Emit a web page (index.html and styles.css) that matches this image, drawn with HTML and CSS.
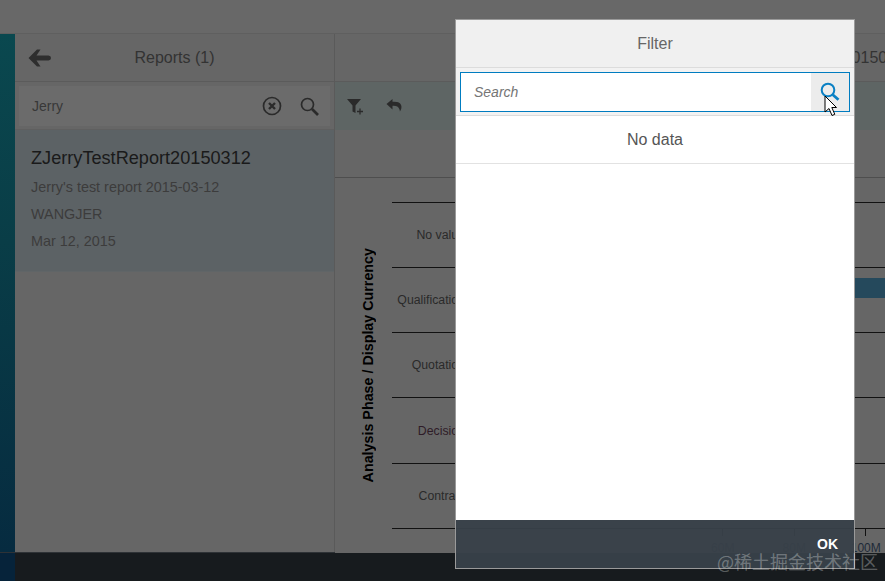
FILE: index.html
```html
<!DOCTYPE html>
<html lang="en">
<head>
<meta charset="utf-8">
<title>Reports</title>
<link rel="stylesheet" href="styles.css">
</head>
<body>
<div class="app">
  <div class="topbar"></div>
  <div class="middle">
    <div class="rail"></div>
    <aside class="master">
      <header class="master-head">
        <svg class="back" width="23" height="18" viewBox="0 0 23 18"><path d="M9 .5 0.500 9 9 17.500h3.500L8.500 11.500H20.500a2.500 2.500 0 0 0 0-5H8.500L12.500.5z" fill="#2e2e2e"/></svg>
        <span class="master-title">Reports (1)</span>
      </header>
      <div class="master-search">
        <div class="field">
          <span class="field-text">Jerry</span>
          <svg class="clear" width="20" height="20" viewBox="0 0 20 20"><circle cx="10" cy="10" r="8.500" fill="none" stroke="#2a2a2a" stroke-width="1.700"/><path d="M7 7l6 6M13 7l-6 6" stroke="#2a2a2a" stroke-width="2.400"/></svg>
          <svg class="find" width="19" height="19" viewBox="0 0 19 19"><circle cx="7.500" cy="7.500" r="6" fill="none" stroke="#2a2a2a" stroke-width="1.700"/><path d="M12 12l6 6" stroke="#2a2a2a" stroke-width="2.600"/></svg>
        </div>
      </div>
      <div class="report">
        <div class="report-name">ZJerryTestReport20150312</div>
        <div class="report-line">Jerry's test report 2015-03-12</div>
        <div class="report-line">WANGJER</div>
        <div class="report-line">Mar 12, 2015</div>
      </div>
    </aside>
    <main class="detail">
      <span class="detail-mark"></span>
      <header class="detail-head"><span class="detail-title">ZJerryTestReport20150312</span></header>
      <div class="toolbar">
        <svg class="tool" width="20" height="20" viewBox="0 0 20 20"><path d="M2 3h14l-5.500 6.500V17l-3-1.500V9.500z" fill="#2a2a2a"/><path d="M12 15.500h6M15 12.500v6" stroke="#2a2a2a" stroke-width="1.300"/></svg>
        <svg class="tool" width="20" height="20" viewBox="0 0 20 20"><path d="M7.500 3 1.500 8l6 5.500V9.700c3.500-.2 6 .4 7 3.800.4 1 .4 1.500.4 2C17.300 12.500 17.500 7 12 6a15 15 0 0 0-4.500-.2z" fill="#2a2a2a"/></svg>
      </div>
      <div class="tabs"></div>
      <section class="chart">
        <div class="axis-title"><span>Analysis Phase / Display Currency</span></div>
        <div class="plot">
          <div class="row"><span class="row-label">No value</span></div>
          <div class="row"><span class="row-label">Qualification</span><span class="bar"></span></div>
          <div class="row"><span class="row-label">Quotation</span></div>
          <div class="row row-tall"><span class="row-label row-label-wine">Decision</span></div>
          <div class="row"><span class="row-label">Contract</span></div>
          <div class="axis">
            <div class="tick"><i></i><span>60M</span></div>
            <div class="tick"><i></i><span>80M</span></div>
            <div class="tick"><i></i><span>100M</span></div>
          </div>
        </div>
      </section>
    </main>
  </div>
  <footer class="footer"></footer>
</div>

<div class="dialog">
  <div class="dialog-head">Filter</div>
  <div class="dialog-search">
    <div class="search-box">
      <span class="search-placeholder">Search</span>
      <span class="search-btn">
        <svg width="20" height="20" viewBox="0 0 20 20"><circle cx="8" cy="8" r="6.300" fill="none" stroke="#0a80c4" stroke-width="2"/><path d="M12.800 12.800l5.700 5" stroke="#0a80c4" stroke-width="2.800"/></svg>
      </span>
    </div>
  </div>
  <div class="dialog-row">No data</div>
  <div class="dialog-body"></div>
  <div class="dialog-foot"><span class="ok">OK</span></div>
</div>
<svg class="cursor" width="13" height="22" viewBox="0 0 13 22"><path d="M1 1v16l4-3.500 3 7 2.800-1.200-3-6.800H12.500z" fill="#fff" stroke="#000" stroke-width="1"/></svg>
<div class="watermark">@稀土掘金技术社区</div>
</body>
</html>
```
FILE: styles.css
```css
* { box-sizing: border-box; }
html, body { margin: 0; height: 581px; overflow: hidden; }
body { font-family: "Liberation Sans", Arial, sans-serif; background: #666; position: relative; }

.app { display: flex; flex-direction: column; width: 885px; height: 581px; }
.topbar { height: 34px; background: #686868; border-bottom: 1px solid #5f5f5f; }
.middle { display: flex; height: 519px; }
.rail { width: 15px; background: linear-gradient(180deg, #0a484f 0%, #093d47 40%, #062b40 100%); }
.footer { flex: 1; background: linear-gradient(90deg, #06233a 15px, #171b1e 15px); border-top: 1px solid #2e3236; margin-top: -1px; }

.master { width: 320px; border-right: 1px solid #5a5a5a; background: #666; display: flex; flex-direction: column; }
.master-head { position: relative; height: 48px; border-bottom: 1px solid #5b5b5b; display: flex; align-items: center; justify-content: center; }
.back { position: absolute; left: 13px; top: 15px; }
.master-title { font-size: 16px; color: #333; }
.master-search { height: 48px; padding: 4px 4px 3px 4px; border-bottom: 1px solid #5f5f5f; }
.field { display: flex; align-items: center; height: 40px; background: #6b6b6b; padding: 0 11px 0 13px; }
.field-text { flex: 1; font-size: 14px; color: #383838; }
.clear { margin-right: 18px; }
.report { height: 142px; padding: 18px 16px 0; background: #5c6265; border-bottom: 1px solid #606567; }
.report-name { font-size: 18.150px; line-height: 20px; color: #1a1a1a; margin-bottom: 6px; }
.report-line { font-size: 14.400px; line-height: 27px; color: #3c3c3c; }

.detail { flex: 1; position: relative; min-width: 0; background: #666; display: flex; flex-direction: column; overflow: hidden; }
.detail-mark { position: absolute; left: -1px; top: 0; width: 1px; height: 3px; background: #0a6fa8; }
.detail-head { height: 48px; border-bottom: 1px solid #5b5b5b; padding-left: 385px; white-space: nowrap; overflow: hidden; line-height: 47px; }
.detail-title { font-size: 16px; color: #333; }
.toolbar { height: 48px; background: #5e6564; display: flex; align-items: center; gap: 20px; padding-left: 10px; }
.tabs { height: 48px; border-bottom: 1px solid #4e4e4e; }
.chart { flex: 1; display: flex; padding: 24px 0 0 25px; min-height: 0; }
.axis-title { width: 32px; height: 326px; display: flex; justify-content: center; align-items: center; }
.axis-title span { writing-mode: vertical-rl; transform: rotate(180deg); font-size: 14.300px; font-weight: 700; color: #000; white-space: nowrap; margin-left: -16px; }
.plot { flex: 1; min-width: 0; }
.row { height: 65px; border-top: 1px solid #111; display: flex; align-items: center; position: relative; }
.row-tall { height: 66px; }
.row-label { width: 73px; flex: none; text-align: right; font-size: 12.300px; color: #2a2a2a; }
.row-label-wine { color: #2e1c28; }
.bar { flex: 1; height: 20px; align-self: flex-start; margin-top: 10px; background: #25495c; }
.axis { display: flex; border-top: 1px solid #111; padding-left: 295px; width: 800px; }
.tick { width: 71.500px; display: flex; flex-direction: column; align-items: center; }
.tick i { width: 1px; height: 7px; background: #111; }
.tick span { font-size: 12px; color: #1e2a38; margin-top: 5px; white-space: nowrap; }

.dialog { position: absolute; left: 455px; top: 19px; width: 400px; height: 550px; display: flex; flex-direction: column; border: 1px solid #9a9a9a; background: transparent; }
.dialog-head { height: 48px; flex: none; background: #f0f0f0; border-bottom: 1px solid #dcdcdc; display: flex; align-items: center; justify-content: center; font-size: 16px; color: #666; }
.dialog-search { height: 48px; flex: none; background: #f2f2f2; padding: 4px 4px 3px; border-bottom: 1px solid #dcdcdc; }
.search-box { height: 40px; background: #fff; border: 1px solid #007cc0; display: flex; align-items: center; justify-content: space-between; }
.search-placeholder { font-size: 14px; font-style: italic; color: #757575; padding-left: 13px; }
.search-btn { width: 38px; height: 38px; background: #ececec; display: flex; align-items: center; justify-content: center; }
.dialog-row { height: 48px; flex: none; background: #fff; border-bottom: 1px solid #e2e2e2; display: flex; align-items: center; justify-content: center; font-size: 16px; color: #555; }
.dialog-body { flex: 1; background: #fff; }
.dialog-foot { height: 48px; flex: none; background: rgba(56, 65, 73, .96); display: flex; align-items: center; justify-content: flex-end; padding-right: 16px; }
.ok { font-size: 14px; font-weight: 700; color: #fff; }

.cursor { position: absolute; left: 824px; top: 95px; }
.watermark { position: absolute; left: 717px; top: 548px; font-family: "Noto Sans CJK SC", sans-serif; font-size: 18px; line-height: 26px; color: rgba(255, 255, 255, .3); white-space: nowrap; }
```
